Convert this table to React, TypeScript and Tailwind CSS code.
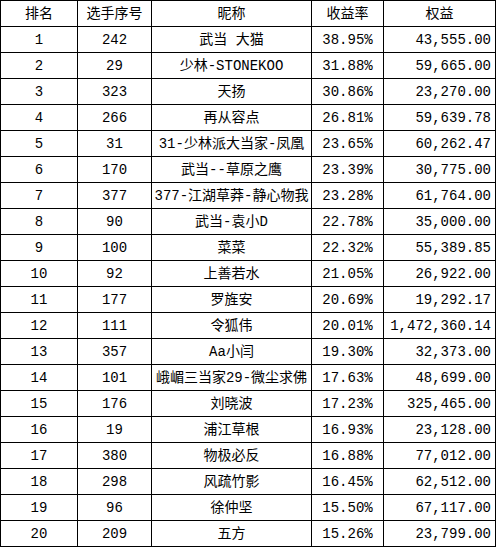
const rows: [number, string, string, string, string][] = [
  [1, "242", "武当 大猫", "38.95%", "43,555.00"],
  [2, "29", "少林-STONEKOO", "31.88%", "59,665.00"],
  [3, "323", "天扬", "30.86%", "23,270.00"],
  [4, "266", "再从容点", "26.81%", "59,639.78"],
  [5, "31", "31-少林派大当家-凤凰", "23.65%", "60,262.47"],
  [6, "170", "武当--草原之鹰", "23.39%", "30,775.00"],
  [7, "377", "377-江湖草莽-静心物我", "23.28%", "61,764.00"],
  [8, "90", "武当-袁小D", "22.78%", "35,000.00"],
  [9, "100", "菜菜", "22.32%", "55,389.85"],
  [10, "92", "上善若水", "21.05%", "26,922.00"],
  [11, "177", "罗旌安", "20.69%", "19,292.17"],
  [12, "111", "令狐伟", "20.01%", "1,472,360.14"],
  [13, "357", "Aa小闫", "19.30%", "32,373.00"],
  [14, "101", "峨嵋三当家29-微尘求佛", "17.63%", "48,699.00"],
  [15, "176", "刘晓波", "17.23%", "325,465.00"],
  [16, "19", "浦江草根", "16.93%", "23,128.00"],
  [17, "380", "物极必反", "16.88%", "77,012.00"],
  [18, "298", "风疏竹影", "16.45%", "62,512.00"],
  [19, "96", "徐仲坚", "15.50%", "67,117.00"],
  [20, "209", "五方", "15.26%", "23,799.00"],
]

const cell = "h-[26px] border-r border-b border-black flex items-center whitespace-nowrap"

export default function App() {
  return (
    <div className="bg-white w-[497px] h-[549px]">
      <div
        className="grid grid-cols-[77px_74px_160px_72px_112px] w-[496px] border-l border-t border-black text-black text-[14px] leading-none"
        style={{ fontFamily: '"Liberation Mono", "Noto Sans CJK SC", monospace' }}
      >
        {["排名", "选手序号", "昵称", "收益率", "权益"].map((h) => (
          <div key={h} className={`${cell} justify-center`}>
            {h}
          </div>
        ))}
        {rows.map(([rank, id, name, rate, equity]) => (
          <div key={rank} className="contents">
            <div className={`${cell} justify-center`}>{rank}</div>
            <div className={`${cell} justify-center`}>{id}</div>
            <div className={`${cell} justify-center`}>{name}</div>
            <div className={`${cell} justify-center`}>{rate}</div>
            <div className={`${cell} justify-end pr-1`}>{equity}</div>
          </div>
        ))}
      </div>
    </div>
  )
}
